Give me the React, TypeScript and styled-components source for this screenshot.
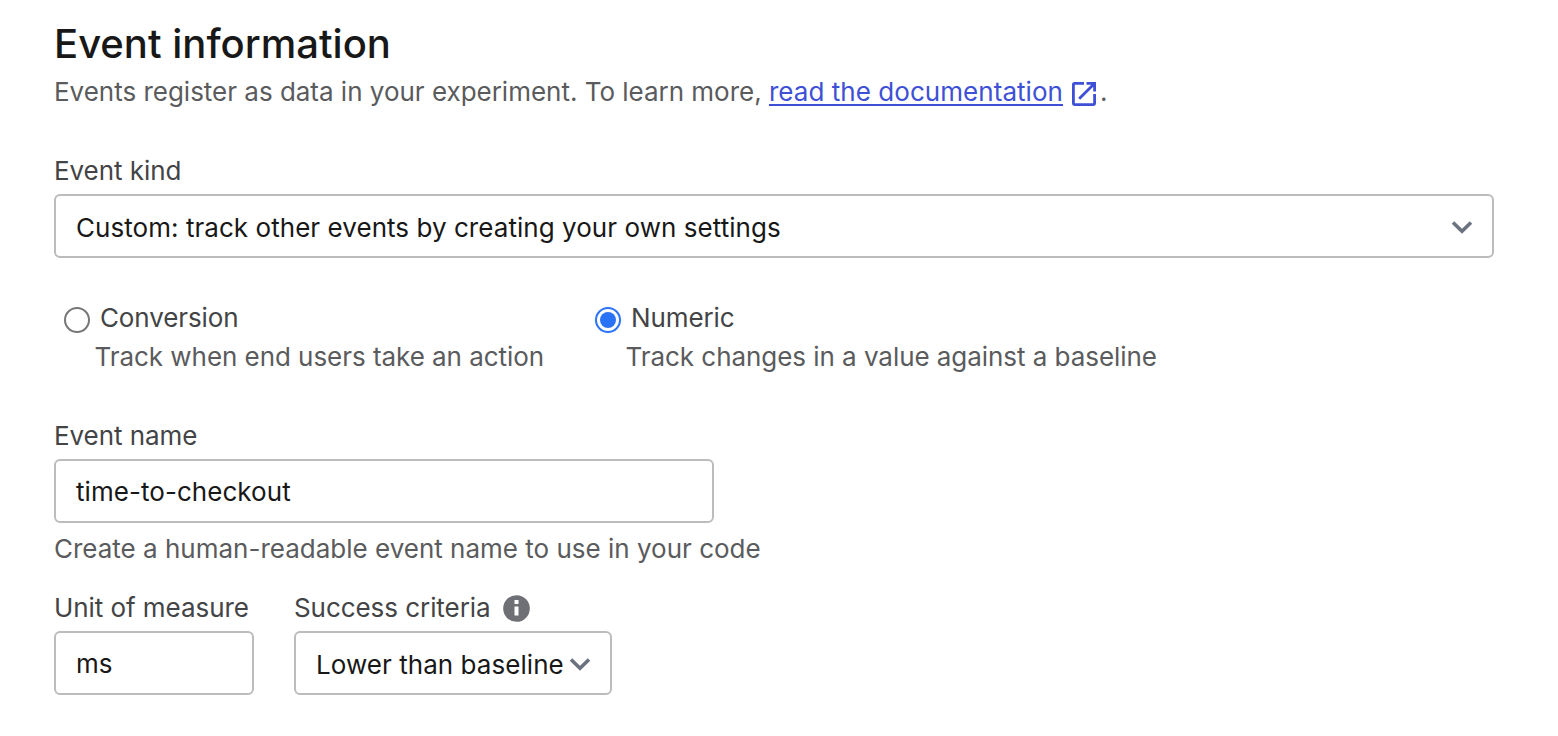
import React from 'react';
import styled, { createGlobalStyle } from 'styled-components';

const Global = createGlobalStyle`
  * { box-sizing: border-box; }
  body { margin: 0; background: #fff; font-family: Inter, sans-serif; font-size: 26px; line-height: 32px; color: #5a5b5d; }
`;
const Page = styled.main`
  width: 1558px; height: 736px; padding: 20px 64px 0 54px; overflow: hidden;
`;
const Title = styled.h1`
  margin: 0; font-size: 40px; line-height: 48px; font-weight: 500; color: #181818; letter-spacing: 0.01px; white-space: nowrap;
`;
const Intro = styled.p`
  margin: 8px 0 0; display: flex; white-space: pre; letter-spacing: -0.015px;
`;
const DocLink = styled.a`
  color: #3d50d6; letter-spacing: 0.05px; text-decoration: underline; text-decoration-thickness: 2px; text-underline-offset: 3px;
`;
const LinkIcon = styled.svg`
  width: 24px; height: 24px; margin: 6px 4px 0 9px; flex: none;
`;
const Label = styled.div<{ $top: number }>`
  display: flex; margin-top: ${p => p.$top}px; height: 32px; color: #434446; letter-spacing: -0.06px; white-space: nowrap;
`;
const Field = styled.div<{ $width: number; $select?: boolean }>`
  display: flex; align-items: center; justify-content: space-between;
  width: ${p => p.$width}px; height: 64px; margin-top: 7px; padding: ${p => (p.$select ? 4 : 2)}px 19px 0 20px;
  border: 2px solid #bcbcbc; border-radius: 6px; color: #181818; letter-spacing: 0.05px; white-space: nowrap;
`;
const Chevron = styled.svg`
  width: 22px; height: 14px; margin-bottom: 2px; flex: none;
`;
const Options = styled.div`
  display: flex; margin-top: 44px; padding-left: 10px;
`;
const Option = styled.div<{ $width: number }>`
  width: ${p => p.$width}px; white-space: nowrap;
`;
const OptionHead = styled.div`
  display: flex; gap: 10px; color: #434446; letter-spacing: -0.12px;
`;
const Dot = styled.svg`
  width: 26px; height: 26px; margin-top: 5px; flex: none;
`;
const OptionHint = styled.div`
  margin: 7px 0 0 30.5px; letter-spacing: -0.05px;
`;
const Hint = styled.div`
  margin-top: 10px; white-space: nowrap;
`;
const Columns = styled.div`
  display: flex; gap: 40px;
`;
const Info = styled.svg`
  width: 27px; height: 27px; margin: 3px 0 0 12.5px;
`;

const Arrow = () => (
  <Chevron viewBox="0 0 22 14"><path d="M2 2.5 11 11.2 20 2.5" fill="none" stroke="#6b7280" strokeWidth="3.6" /></Chevron>
);

export default function App() {
  return (
    <Page>
      <Global />
      <Title>Event information</Title>
      <Intro>
        <span>Events register as data in your experiment. To learn more, </span>
        <DocLink>read the documentation</DocLink>
        <LinkIcon viewBox="0 0 24 24" fill="none" stroke="#3d50d6">
          <path d="M12 1.4H2.4a1 1 0 0 0-1 1v19.2a1 1 0 0 0 1 1h19.2a1 1 0 0 0 1-1V12" strokeWidth="2.8" />
          <path d="M14.5 1.4h8.1v8.1M22 2 7.2 16.8" strokeWidth="2.8" />
        </LinkIcon>
        <span>.</span>
      </Intro>
      <Label $top={47}>Event kind</Label>
      <Field $width={1440} $select>Custom: track other events by creating your own settings<Arrow /></Field>
      <Options>
        <Option $width={531}>
          <OptionHead>
            <Dot viewBox="0 0 26 26"><circle cx="13" cy="13" r="12" fill="#fff" stroke="#767676" strokeWidth="2" /></Dot>
            Conversion
          </OptionHead>
          <OptionHint>Track when end users take an action</OptionHint>
        </Option>
        <Option $width={600}>
          <OptionHead>
            <Dot viewBox="0 0 26 26"><circle cx="13" cy="13" r="12" fill="#fff" stroke="#2b73f6" strokeWidth="2" /><circle cx="13" cy="13" r="8" fill="#2b73f6" /></Dot>
            Numeric
          </OptionHead>
          <OptionHint>Track changes in a value against a baseline</OptionHint>
        </Option>
      </Options>
      <Label $top={47}>Event name</Label>
      <Field $width={660}>time-to-checkout</Field>
      <Hint>Create a human-readable event name to use in your code</Hint>
      <Columns>
        <div>
          <Label $top={27}>Unit of measure</Label>
          <Field $width={200}>ms</Field>
        </div>
        <div>
          <Label $top={27}>
            Success criteria
            <Info viewBox="0 0 27 27"><circle cx="13.5" cy="13.5" r="13.3" fill="#6f7075" /><path d="M11.5 5h4v4h-4zM11.5 11.5h4v9h-4z" fill="#fff" /></Info>
          </Label>
          <Field $width={318} $select>Lower than baseline<Arrow /></Field>
        </div>
      </Columns>
    </Page>
  );
}
